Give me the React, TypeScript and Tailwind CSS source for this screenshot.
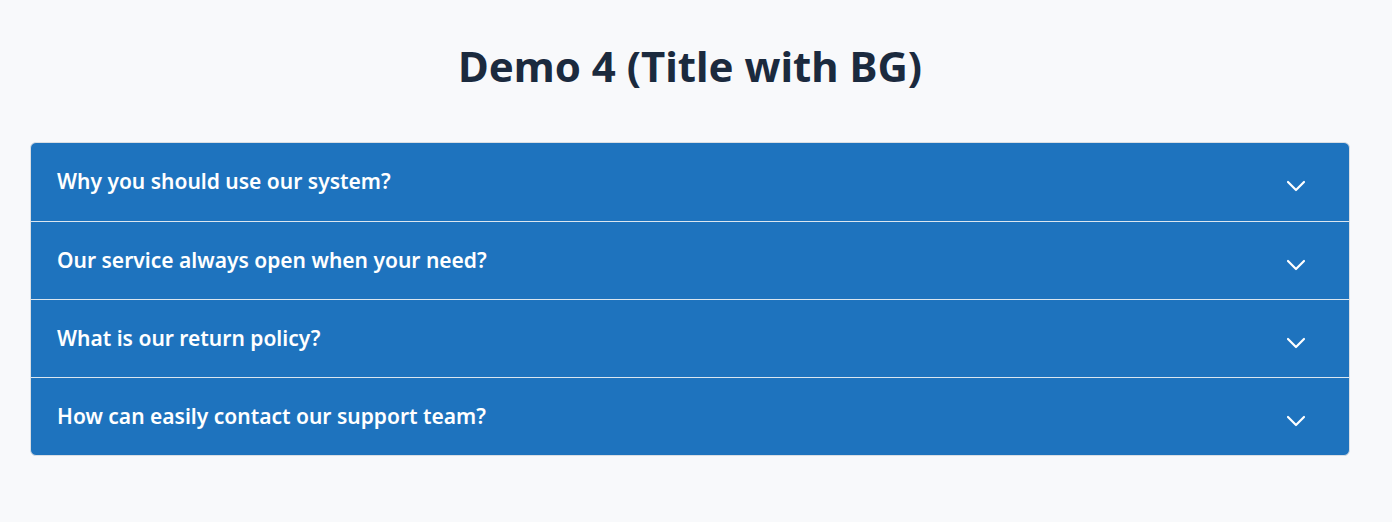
const faqs = [
  "Why you should use our system?",
  "Our service always open when your need?",
  "What is our return policy?",
  "How can easily contact our support team?",
];

function Chevron() {
  return (
    <svg width="20" height="20" viewBox="0 0 20 20" fill="none" className="shrink-0 mt-[8px]">
      <path d="M2 6l8 8 8-8" stroke="#ffffff" strokeWidth="2.2" strokeLinecap="round" strokeLinejoin="round" />
    </svg>
  );
}

export default function App() {
  return (
    <div className="min-h-[522px] bg-[#f8f9fb] pt-[38px] px-[30px] font-['Noto_Sans',sans-serif]">
      <div className="w-[1320px]">
        <h2 className="text-center text-[42px] leading-[56px] font-bold text-[#1b2a3e] mb-[48px]">
          Demo 4 (Title with BG)
        </h2>
        <div className="rounded-[6px] border border-[#d9dee4] overflow-hidden bg-[#1e73be]">
          {faqs.map((q, i) => (
            <button
              key={q}
              className={
                "w-full h-[78px] flex items-center justify-between pl-[26px] pr-[43px] text-left text-white text-[21px] font-semibold " +
                (i > 0 ? "border-t border-[#dbe6f0]" : "")
              }
            >
              <span>{q}</span>
              <Chevron />
            </button>
          ))}
        </div>
      </div>
    </div>
  );
}
